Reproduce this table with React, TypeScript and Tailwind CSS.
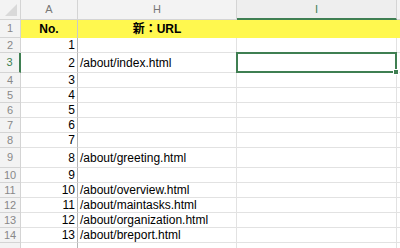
import React from 'react';

type Row = { n: number; h: number; a?: string; url?: string };

const rows: Row[] = [
  { n: 2, h: 15, a: '1' },
  { n: 3, h: 20, a: '2', url: '/about/index.html' },
  { n: 4, h: 15, a: '3' },
  { n: 5, h: 15, a: '4' },
  { n: 6, h: 15, a: '5' },
  { n: 7, h: 15, a: '6' },
  { n: 8, h: 15, a: '7' },
  { n: 9, h: 20, a: '8', url: '/about/greeting.html' },
  { n: 10, h: 15, a: '9' },
  { n: 11, h: 15, a: '10', url: '/about/overview.html' },
  { n: 12, h: 15, a: '11', url: '/about/maintasks.html' },
  { n: 13, h: 15, a: '12', url: '/about/organization.html' },
  { n: 14, h: 15, a: '13', url: '/about/breport.html' },
];

const font = { fontFamily: '"Liberation Sans", Arial, "Noto Sans CJK JP", sans-serif' };

export default function App() {
  return (
    <div className="relative w-[400px] h-[248px] overflow-hidden bg-white text-[12px] text-[#222]" style={font}>
      {/* column headers */}
      <div className="flex h-[20px]">
        <div className="relative w-[21px] shrink-0 bg-[#f3f3f3] border-r border-b border-[#d4d4d4]">
          <div className="absolute right-[3px] bottom-[3px] w-0 h-0 border-l-[12px] border-l-transparent border-b-[12px] border-b-[#d9d9d9]" />
        </div>
        <div className="w-[57px] shrink-0 bg-[#f3f3f3] border-r border-b border-[#d4d4d4] flex items-center justify-center text-[11px] text-[#777]">A</div>
        <div className="w-[159px] shrink-0 bg-[#f3f3f3] border-r border-b border-[#d4d4d4] flex items-center justify-center text-[11px] text-[#777]">H</div>
        <div className="w-[160px] shrink-0 bg-[#eeeeee] border-r border-[#d4d4d4] border-b-2 border-b-[#3f7f52] flex items-center justify-center text-[11px] text-[#3f7f52]">I</div>
        <div className="flex-1 bg-[#f3f3f3] border-b border-[#d4d4d4]" />
      </div>

      {/* row 1: yellow titles */}
      <div className="flex h-[18px]">
        <div className="w-[21px] shrink-0 bg-[#f3f3f3] border-r border-b border-[#d4d4d4] flex items-center justify-center text-[11px] text-[#888]">1</div>
        <div className="w-[57px] shrink-0 bg-[#fff84f] border-r border-[#c9c9c9] flex items-center justify-center text-[12px] font-bold text-black">No.</div>
        <div className="w-[159px] shrink-0 bg-[#fff84f] border-r border-[#fff84f] flex items-center justify-center text-[12px] font-bold text-black">新：URL</div>
        <div className="flex-1 bg-[#fff84f]" />
      </div>

      {rows.map((r) => {
        const sel = r.n === 3;
        return (
          <div key={r.n} className="flex" style={{ height: r.h }}>
            <div
              className={`w-[21px] shrink-0 bg-[#f3f3f3] border-b border-[#d4d4d4] flex items-center justify-center text-[11px] ${
                sel ? 'text-[#3f7f52] border-r-2 border-r-[#3f7f52]' : 'text-[#888] border-r'
              }`}
            >
              {r.n}
            </div>
            <div className="w-[57px] shrink-0 border-r border-r-[#b5b5b5] border-b border-b-[#e2e2e2] flex items-center justify-end pr-[2px] text-[12px] text-black">
              {r.a}
            </div>
            <div className="w-[159px] shrink-0 border-r border-b border-[#e2e2e2] flex items-center pl-[2px] whitespace-nowrap text-[12px] text-black">
              {r.url}
            </div>
            <div className="w-[160px] shrink-0 border-r border-b border-[#e2e2e2]" />
            <div className="flex-1 border-b border-[#e2e2e2]" />
          </div>
        );
      })}

      {/* row 15, mostly below the fold */}
      <div className="flex h-[15px]">
        <div className="w-[21px] shrink-0 bg-[#f3f3f3] border-r border-[#d4d4d4]" />
        <div className="w-[57px] shrink-0 border-r border-r-[#b5b5b5]" />
        <div className="w-[159px] shrink-0 border-r border-[#e2e2e2]" />
        <div className="w-[160px] shrink-0 border-r border-[#e2e2e2]" />
      </div>

      {/* active cell I3 */}
      <div className="absolute left-[236px] top-[52px] w-[161px] h-[21px] border-2 border-[#3f7f52]" />
      <div className="absolute left-[393px] top-[69px] w-[6px] h-[6px] bg-[#3f7f52] border border-white" />
    </div>
  );
}
